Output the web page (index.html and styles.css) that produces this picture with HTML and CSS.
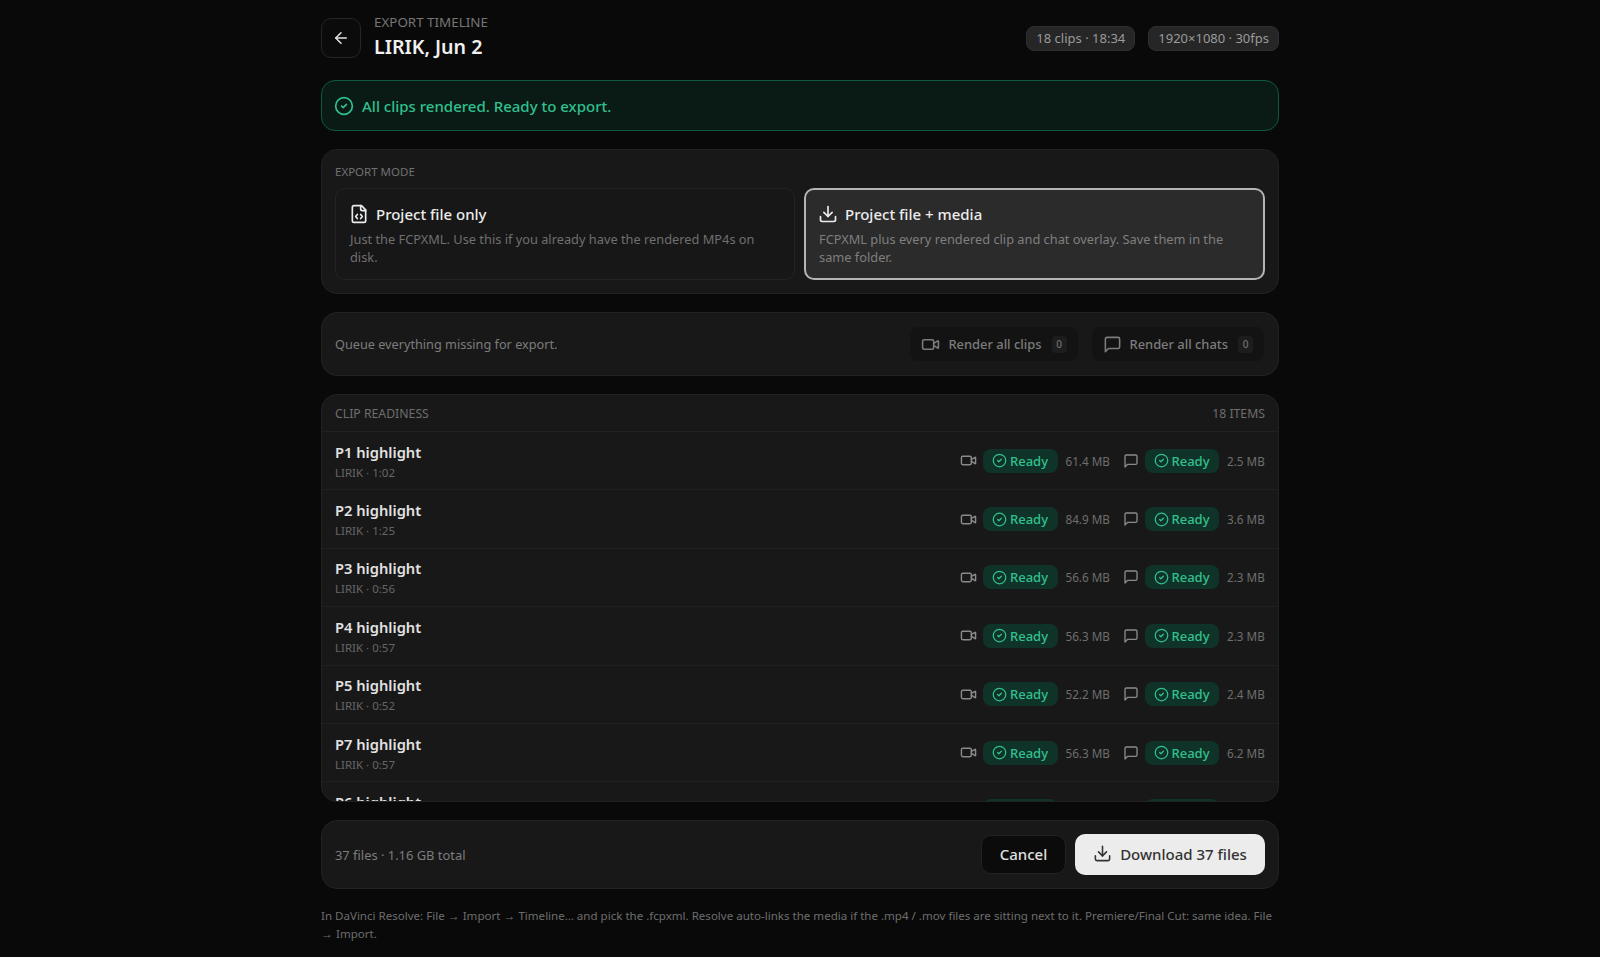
FILE: index.html
```html
<!DOCTYPE html>
<html lang="en">
<head>
<meta charset="utf-8">
<title>Export timeline</title>
<link rel="stylesheet" href="styles.css">
</head>
<body>
<svg class="defs" width="0" height="0" aria-hidden="true">
  <symbol id="i-video" viewBox="0 0 24 24"><path d="m16 13 5.223 3.482a.5.5 0 0 0 .777-.416V7.87a.5.5 0 0 0-.752-.432L16 10.5"/><rect x="2" y="6" width="14" height="12" rx="2"/></symbol>
  <symbol id="i-chat" viewBox="0 0 24 24"><path d="M21 15a2 2 0 0 1-2 2H7l-4 4V5a2 2 0 0 1 2-2h14a2 2 0 0 1 2 2z"/></symbol>
  <symbol id="i-check" viewBox="0 0 24 24"><circle cx="12" cy="12" r="10"/><path d="m9 12 2 2 4-4"/></symbol>
  <symbol id="i-download" viewBox="0 0 24 24"><path d="M12 15V3"/><path d="M21 15v4a2 2 0 0 1-2 2H5a2 2 0 0 1-2-2v-4"/><path d="m7 10 5 5 5-5"/></symbol>
  <symbol id="i-file" viewBox="0 0 24 24"><path d="M10 12.5 8 15l2 2.5"/><path d="m14 12.5 2 2.5-2 2.5"/><path d="M14 2v4a2 2 0 0 0 2 2h4"/><path d="M15 2H6a2 2 0 0 0-2 2v16a2 2 0 0 0 2 2h12a2 2 0 0 0 2-2V7z"/></symbol>
  <symbol id="i-back" viewBox="0 0 24 24"><path d="m12 19-7-7 7-7"/><path d="M19 12H5"/></symbol>
</svg>
<main class="page">
  <header class="top">
    <button class="back"><svg class="ic ic18"><use href="#i-back"/></svg></button>
    <div class="heading">
      <div class="eyebrow">EXPORT TIMELINE</div>
      <h1 class="title">LIRIK, Jun 2</h1>
    </div>
    <div class="chips">
      <span class="chip">18 clips · 18:34</span>
      <span class="chip">1920×1080 · 30fps</span>
    </div>
  </header>

  <div class="banner"><svg class="ic ic20"><use href="#i-check"/></svg><span>All clips rendered. Ready to export.</span></div>

  <section class="panel mode">
    <div class="label">EXPORT MODE</div>
    <div class="cards">
      <div class="card">
        <div class="card-title"><svg class="ic ic20"><use href="#i-file"/></svg>Project file only</div>
        <p class="card-text">Just the FCPXML. Use this if you already have the rendered MP4s on disk.</p>
      </div>
      <div class="card selected">
        <div class="card-title"><svg class="ic ic20"><use href="#i-download"/></svg>Project file + media</div>
        <p class="card-text">FCPXML plus every rendered clip and chat overlay. Save them in the same folder.</p>
      </div>
    </div>
  </section>

  <section class="panel queue">
    <span class="muted">Queue everything missing for export.</span>
    <div class="queue-actions">
      <button class="render"><svg class="ic ic19"><use href="#i-video"/></svg>Render all clips<span class="zero">0</span></button>
      <button class="render"><svg class="ic ic19"><use href="#i-chat"/></svg>Render all chats<span class="zero">0</span></button>
    </div>
  </section>

  <section class="panel list">
    <div class="list-head"><span>CLIP READINESS</span><span>18 ITEMS</span></div>
    <div class="rows">
      <div class="row"><div class="info"><div class="name">P1 highlight</div><div class="sub">LIRIK · 1:02</div></div><svg class="ic ic17 dim"><use href="#i-video"/></svg><span class="pill"><svg class="ic ic15"><use href="#i-check"/></svg>Ready</span><span class="size lg">61.4 MB</span><svg class="ic ic16 dim"><use href="#i-chat"/></svg><span class="pill"><svg class="ic ic15"><use href="#i-check"/></svg>Ready</span><span class="size sm">2.5 MB</span></div>
      <div class="row"><div class="info"><div class="name">P2 highlight</div><div class="sub">LIRIK · 1:25</div></div><svg class="ic ic17 dim"><use href="#i-video"/></svg><span class="pill"><svg class="ic ic15"><use href="#i-check"/></svg>Ready</span><span class="size lg">84.9 MB</span><svg class="ic ic16 dim"><use href="#i-chat"/></svg><span class="pill"><svg class="ic ic15"><use href="#i-check"/></svg>Ready</span><span class="size sm">3.6 MB</span></div>
      <div class="row"><div class="info"><div class="name">P3 highlight</div><div class="sub">LIRIK · 0:56</div></div><svg class="ic ic17 dim"><use href="#i-video"/></svg><span class="pill"><svg class="ic ic15"><use href="#i-check"/></svg>Ready</span><span class="size lg">56.6 MB</span><svg class="ic ic16 dim"><use href="#i-chat"/></svg><span class="pill"><svg class="ic ic15"><use href="#i-check"/></svg>Ready</span><span class="size sm">2.3 MB</span></div>
      <div class="row"><div class="info"><div class="name">P4 highlight</div><div class="sub">LIRIK · 0:57</div></div><svg class="ic ic17 dim"><use href="#i-video"/></svg><span class="pill"><svg class="ic ic15"><use href="#i-check"/></svg>Ready</span><span class="size lg">56.3 MB</span><svg class="ic ic16 dim"><use href="#i-chat"/></svg><span class="pill"><svg class="ic ic15"><use href="#i-check"/></svg>Ready</span><span class="size sm">2.3 MB</span></div>
      <div class="row"><div class="info"><div class="name">P5 highlight</div><div class="sub">LIRIK · 0:52</div></div><svg class="ic ic17 dim"><use href="#i-video"/></svg><span class="pill"><svg class="ic ic15"><use href="#i-check"/></svg>Ready</span><span class="size lg">52.2 MB</span><svg class="ic ic16 dim"><use href="#i-chat"/></svg><span class="pill"><svg class="ic ic15"><use href="#i-check"/></svg>Ready</span><span class="size sm">2.4 MB</span></div>
      <div class="row"><div class="info"><div class="name">P7 highlight</div><div class="sub">LIRIK · 0:57</div></div><svg class="ic ic17 dim"><use href="#i-video"/></svg><span class="pill"><svg class="ic ic15"><use href="#i-check"/></svg>Ready</span><span class="size lg">56.3 MB</span><svg class="ic ic16 dim"><use href="#i-chat"/></svg><span class="pill"><svg class="ic ic15"><use href="#i-check"/></svg>Ready</span><span class="size sm">6.2 MB</span></div>
      <div class="row"><div class="info"><div class="name">P6 highlight</div><div class="sub">LIRIK · 0:48</div></div><svg class="ic ic17 dim"><use href="#i-video"/></svg><span class="pill"><svg class="ic ic15"><use href="#i-check"/></svg>Ready</span><span class="size lg">48.1 MB</span><svg class="ic ic16 dim"><use href="#i-chat"/></svg><span class="pill"><svg class="ic ic15"><use href="#i-check"/></svg>Ready</span><span class="size sm">2.1 MB</span></div>
    </div>
  </section>

  <section class="panel foot">
    <span class="muted foot-text">37 files · 1.16 GB total</span>
    <div class="foot-actions">
      <button class="cancel">Cancel</button>
      <button class="download"><svg class="ic ic19"><use href="#i-download"/></svg>Download 37 files</button>
    </div>
  </section>

  <p class="note">In DaVinci Resolve: File <span class="arr">→</span> Import <span class="arr">→</span> Timeline… and pick the .fcpxml. Resolve auto-links the media if the .mp4 / .mov files are sitting next to it. Premiere/Final Cut: same idea. File <span class="arr">→</span> Import.</p>
</main>
</body>
</html>
```

FILE: styles.css
```css
* { box-sizing: border-box; }
html, body { margin: 0; height: 100%; }
body {
  background: #090909;
  color: #e8e8e8;
  font-family: "Noto Sans", "Open Sans", sans-serif;
  overflow: hidden;
}
.defs { position: absolute; }
.ic { fill: none; stroke: currentColor; stroke-width: 2; stroke-linecap: round; stroke-linejoin: round; flex: none; }
.ic15 { width: 15px; height: 15px; }
.ic16 { width: 16px; height: 16px; }
.ic17 { width: 17px; height: 17px; }
.ic18 { width: 18px; height: 18px; }
.ic19 { width: 19px; height: 19px; }
.ic20 { width: 20px; height: 20px; }
.dim { color: #8a8a8a; }
button { font-family: inherit; cursor: pointer; }

.page { width: 958px; margin: 0 auto; padding-top: 18px; display: flex; flex-direction: column; }

.top { display: flex; align-items: center; height: 40px; gap: 13px; }
.back { width: 40px; height: 40px; border-radius: 10px; background: #0b0b0b; border: 1px solid #262626; color: #e5e5e5; display: flex; align-items: center; justify-content: center; padding: 0; }
.heading { flex: 1; margin-top: -3px; }
.eyebrow { font-size: 13.4px; line-height: 18px; color: #767676; }
.title { margin: 3px 0 0; font-size: 19.6px; line-height: 26px; font-weight: 600; color: #f0f0f0; }
.chips { display: flex; gap: 13px; }
.chip { height: 25px; line-height: 23px; padding: 0 9px; border-radius: 8px; background: #262626; border: 1px solid #2e2e2e; color: #9a9a9a; font-size: 13px; }

.banner { margin-top: 22px; height: 51px; border-radius: 14px; border: 1px solid #0e5a40; background: #0a1a15; color: #30c08e; display: flex; align-items: center; gap: 8px; padding: 0 12px; font-size: 15px; font-weight: 500; }

.panel { background: #181818; border: 1px solid #222; border-radius: 16px; }
.label { font-size: 11.5px; line-height: 16px; color: #707070; }
.mode { margin-top: 18px; height: 145px; padding: 14px 13px; }
.cards { margin-top: 8px; display: grid; grid-template-columns: 460px 461px; gap: 9px; }
.card { height: 92px; border-radius: 10px; border: 1px solid #242424; background: #171717; padding: 14px; }
.card.selected { background: #2b2b2b; border: 2px solid #b4b4b4; padding: 13px; }
.card-title { display: flex; align-items: center; gap: 7px; margin-left: -1px; font-size: 15px; line-height: 22px; font-weight: 500; color: #ececec; }
.card-text { margin: 5px 0 0; font-size: 12.8px; line-height: 18px; color: #6f6f6f; }
.selected .card-text { color: #7f7f7f; }

.queue { margin-top: 18px; height: 64px; padding: 0 14px 0 13px; display: flex; align-items: center; justify-content: space-between; }
.muted { font-size: 12.7px; color: #7c7c7c; }
.foot-text { font-size: 12.9px; }
.queue-actions { display: flex; gap: 14px; }
.render { height: 34px; padding: 0 11px; display: flex; align-items: center; gap: 8px; border: 0; border-radius: 8px; background: #131313; color: #7c7c7c; font-size: 12.9px; font-weight: 500; }
.zero { width: 15px; height: 17px; line-height: 17px; margin-left: 2px; font-size: 10px; border-radius: 4px; background: #1d1d1d; color: #707070; text-align: center; }

.list { margin-top: 18px; height: 408px; overflow: hidden; display: flex; flex-direction: column; }
.list-head { flex: none; height: 37px; padding: 0 13px; display: flex; align-items: center; justify-content: space-between; border-bottom: 1px solid #222; font-size: 12.25px; color: #6e6e6e; }
.rows { flex: 1; overflow: hidden; }
.row { height: 58.4px; padding: 0 13px; display: flex; align-items: center; border-bottom: 1px solid #202020; }
.info { flex: 1; }
.name { font-size: 14.7px; line-height: 20px; font-weight: 600; color: #e2e2e2; }
.sub { font-size: 11.5px; line-height: 18px; margin-top: 2px; margin-bottom: -2px; color: #666; }
.pill { height: 24px; width: 74.5px; margin-left: 6px; padding-left: 9px; display: flex; align-items: center; gap: 3px; border-radius: 8px; background: #0f3328; color: #33c08f; font-size: 13px; font-weight: 500; }
.size { margin-left: 8px; font-size: 11.7px; color: #6e6e6e; white-space: nowrap; }
.size.lg { width: 44px; margin-right: 13px; }
.size.sm { width: 38px; }

.foot { margin-top: 18px; height: 69px; padding: 0 13px; display: flex; align-items: center; justify-content: space-between; }
.foot-actions { display: flex; align-items: center; gap: 9px; }
.cancel { width: 85px; height: 39px; padding: 0 0 2px; border-radius: 10px; border: 1px solid #222; background: #0b0b0b; color: #e0e0e0; font-size: 15px; font-weight: 500; }
.download { width: 190px; height: 41px; padding: 0 0 2px; border-radius: 10px; border: 0; background: #ececec; color: #333; display: flex; align-items: center; justify-content: center; gap: 8px; font-size: 15px; font-weight: 500; }

.note { margin: 18px 0 0; font-size: 11.55px; line-height: 18px; color: #6d6d6d; }
.arr { font-family: "Liberation Sans", sans-serif; font-weight: 700; font-size: 12px; }
```
